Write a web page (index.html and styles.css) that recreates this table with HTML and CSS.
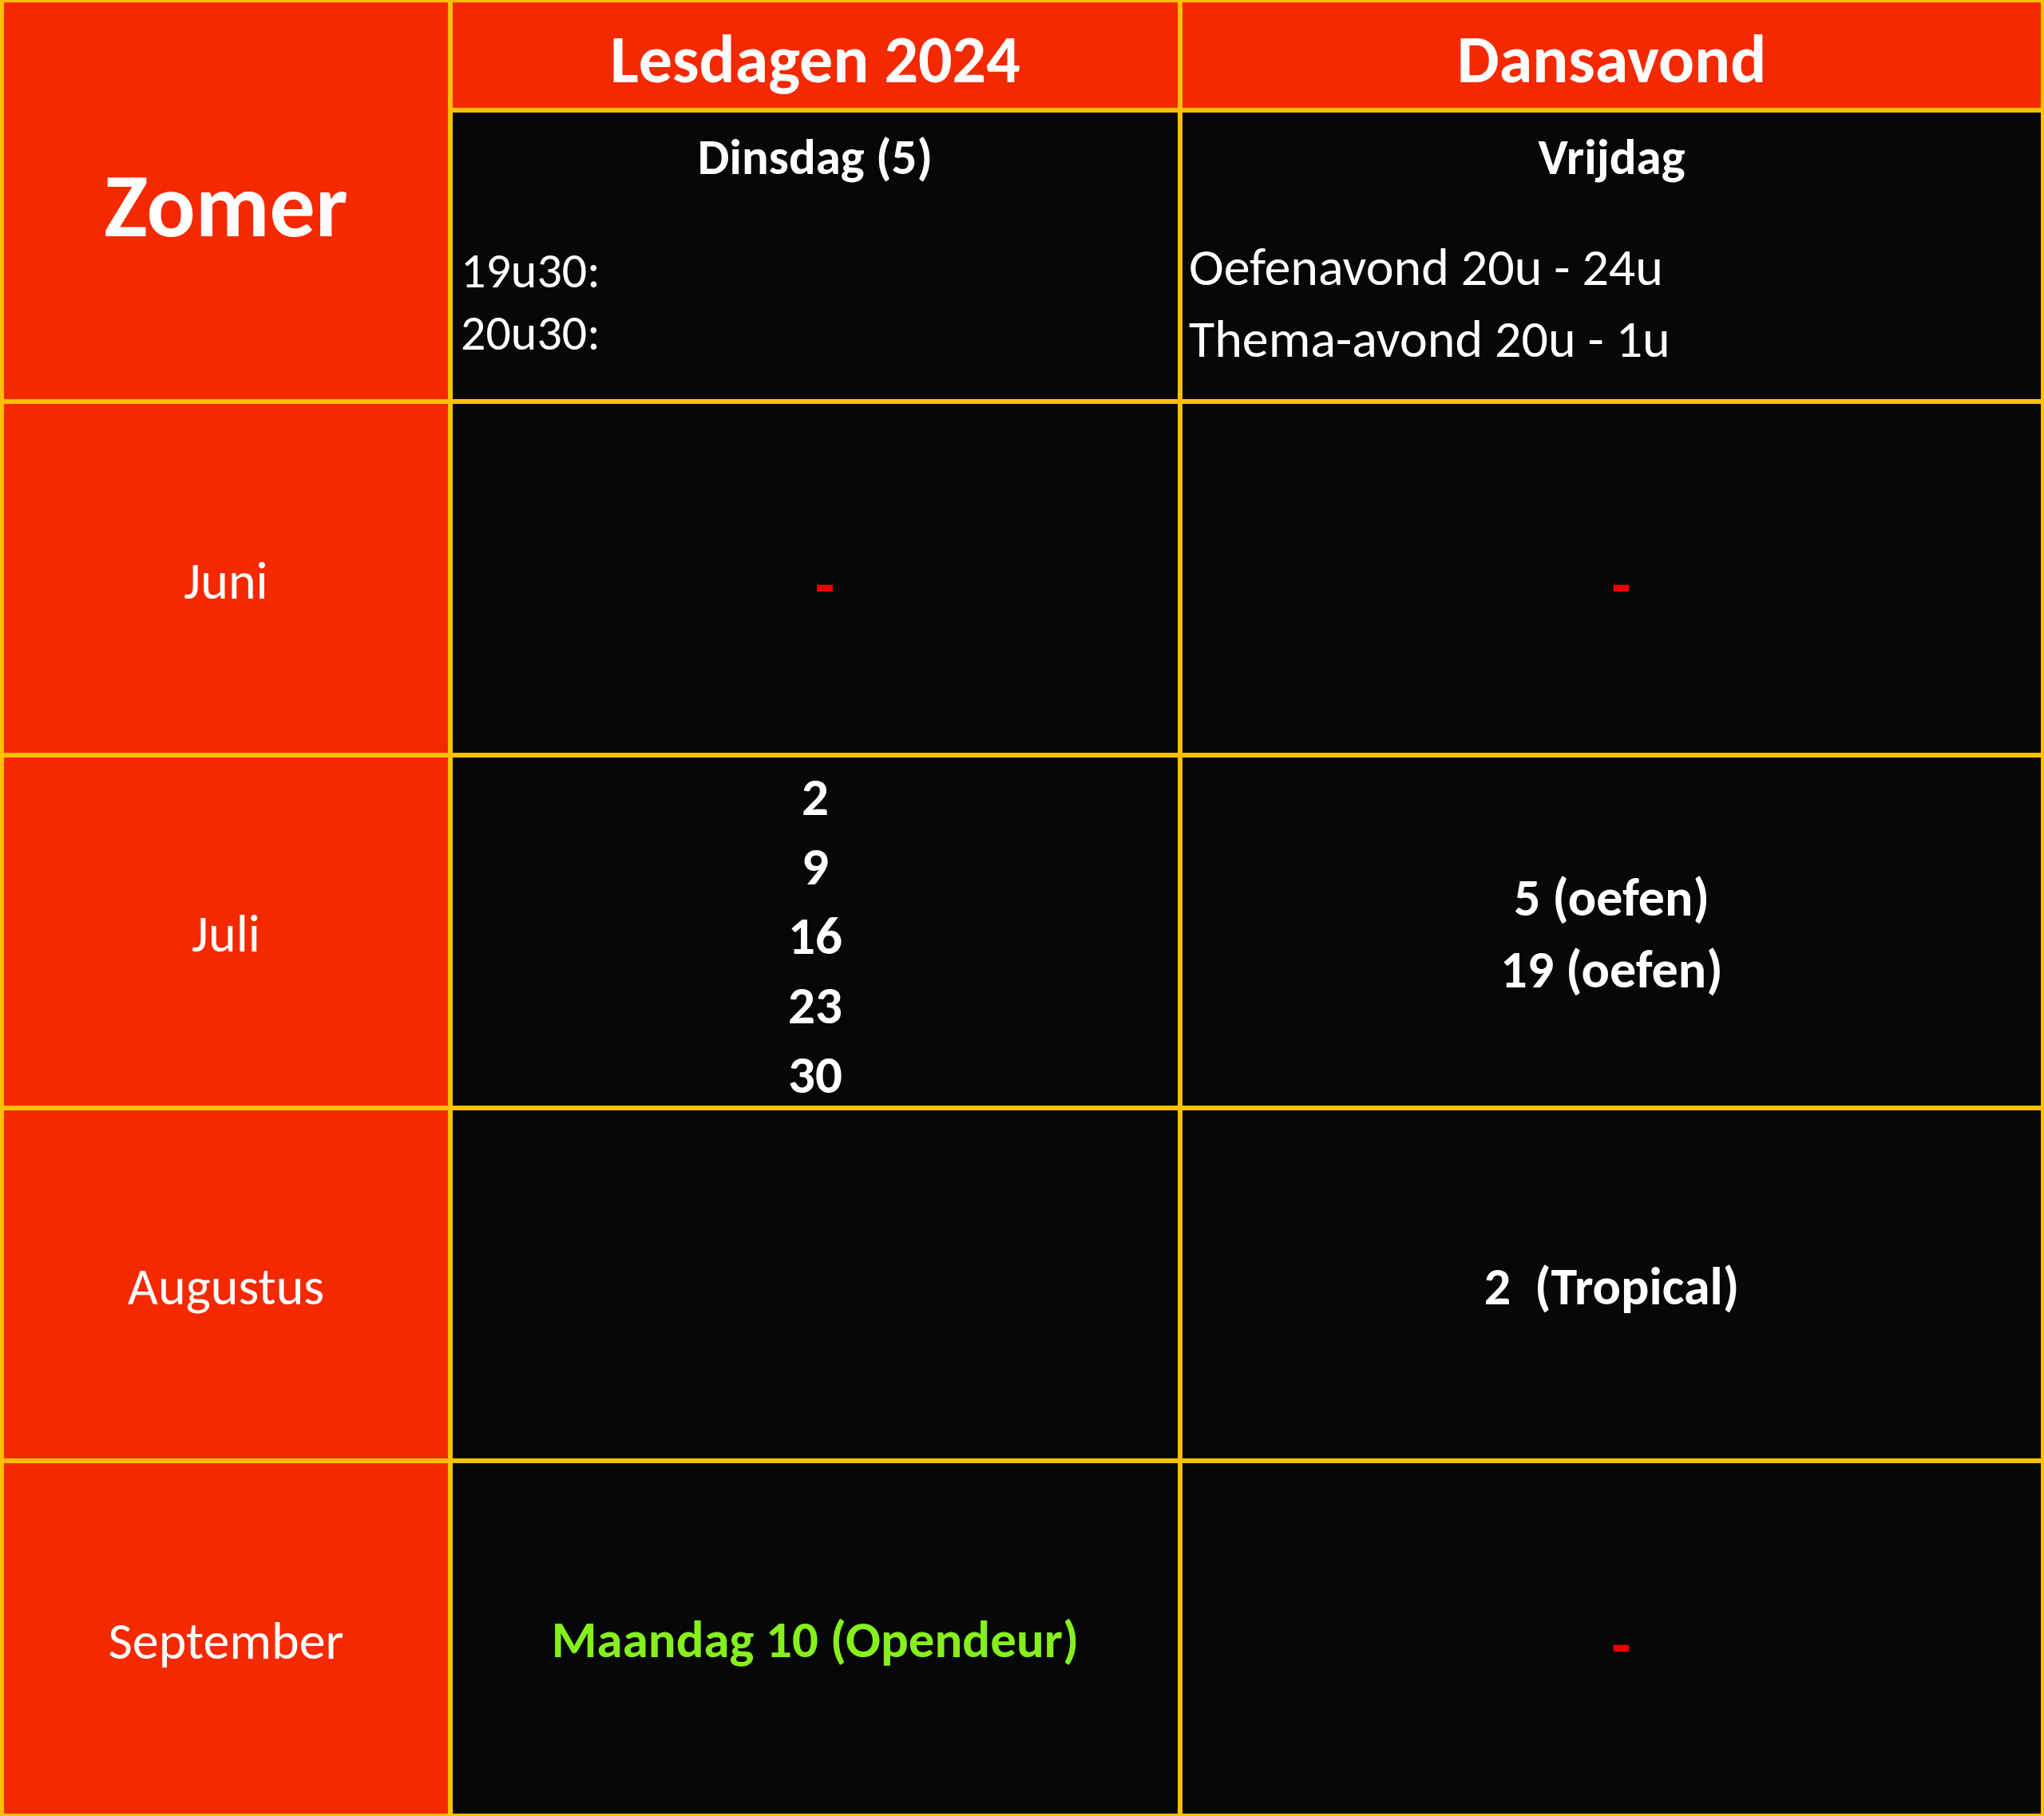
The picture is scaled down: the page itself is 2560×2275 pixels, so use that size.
FILE: index.html
```html
<!DOCTYPE html>
<html lang="nl">
<head>
<meta charset="utf-8">
<title>Zomer 2024</title>
<link rel="stylesheet" href="styles.css">
</head>
<body>
<div class="sheet">
  <div class="cell red season"><span>Zomer</span></div>
  <div class="cell red head">Lesdagen 2024</div>
  <div class="cell red head">Dansavond</div>

  <div class="cell dark sub">
    <div class="title">Dinsdag (5)</div>
    <div class="times">
      <div>19u30:</div>
      <div>20u30:</div>
    </div>
  </div>
  <div class="cell dark sub">
    <div class="title">Vrijdag</div>
    <div class="nights">
      <div>Oefenavond 20u - 24u</div>
      <div>Thema-avond 20u - 1u</div>
    </div>
  </div>

  <div class="cell red month">Juni</div>
  <div class="cell dark center"><span class="dash">-</span></div>
  <div class="cell dark center"><span class="dash">-</span></div>

  <div class="cell red month">Juli</div>
  <div class="cell dark center">
    <div class="dates">
      <div>2</div>
      <div>9</div>
      <div>16</div>
      <div>23</div>
      <div>30</div>
    </div>
  </div>
  <div class="cell dark center">
    <div class="events">
      <div>5 (oefen)</div>
      <div>19 (oefen)</div>
    </div>
  </div>

  <div class="cell red month">Augustus</div>
  <div class="cell dark center"></div>
  <div class="cell dark center"><div class="events">2&nbsp; (Tropical)</div></div>

  <div class="cell red month">September</div>
  <div class="cell dark center"><div class="open">Maandag 10 (Opendeur)</div></div>
  <div class="cell dark center"><span class="dash">-</span></div>
</div>
</body>
</html>
```

FILE: styles.css
```css
html, body {
  margin: 0;
  padding: 0;
  background: #060808;
}

body {
  font-family: "Carlito", "Lato", "Liberation Sans", sans-serif;
  color: #ffffff;
}

.sheet {
  width: 2560px;
  height: 2275px;
  box-sizing: border-box;
  display: grid;
  grid-template-columns: 556px 908px 1075px;
  grid-template-rows: 132px 359px 437px 436px 436px 439px;
  gap: 6px;
  padding: 3px 4px 3px 5px;
  background: #ffc000;
}

.cell {
  box-sizing: border-box;
  min-width: 0;
  min-height: 0;
}

.red {
  background: #f52900;
}

.dark {
  background: #060808;
}

.season {
  grid-row: 1 / 3;
  display: flex;
  align-items: center;
  justify-content: center;
  padding-top: 12px;
  font-weight: 700;
  font-size: 114px;
  line-height: 1.2;
}

.head {
  display: flex;
  align-items: center;
  justify-content: center;
  padding-top: 12px;
  font-weight: 700;
  font-size: 84px;
  line-height: 1.2;
}

.sub {
  display: flex;
  flex-direction: column;
  padding-top: 26px;
}

.title {
  text-align: center;
  font-weight: 700;
  font-size: 63px;
  line-height: 60px;
}

.times {
  margin-top: 73px;
  padding-left: 10px;
  font-size: 62px;
  line-height: 78px;
}

.nights {
  margin-top: 63px;
  padding-left: 8px;
  font-size: 66px;
  line-height: 90px;
}

.month {
  display: flex;
  align-items: center;
  justify-content: center;
  padding-top: 6px;
  font-size: 66px;
  line-height: 1.2;
}

.center {
  display: flex;
  align-items: center;
  justify-content: center;
  text-align: center;
}

.dates {
  padding-top: 10px;
  font-weight: 700;
  font-size: 67px;
  line-height: 87px;
}

.events {
  padding-top: 6px;
  font-weight: 700;
  font-size: 66px;
  line-height: 90px;
}

.open {
  padding-top: 2px;
  font-weight: 700;
  font-size: 65px;
  line-height: 1.2;
  color: #86f01c;
}

.dash {
  padding-left: 24px;
  padding-top: 16px;
  font-weight: 900;
  font-size: 80px;
  line-height: 1;
  color: #f00000;
}
```
